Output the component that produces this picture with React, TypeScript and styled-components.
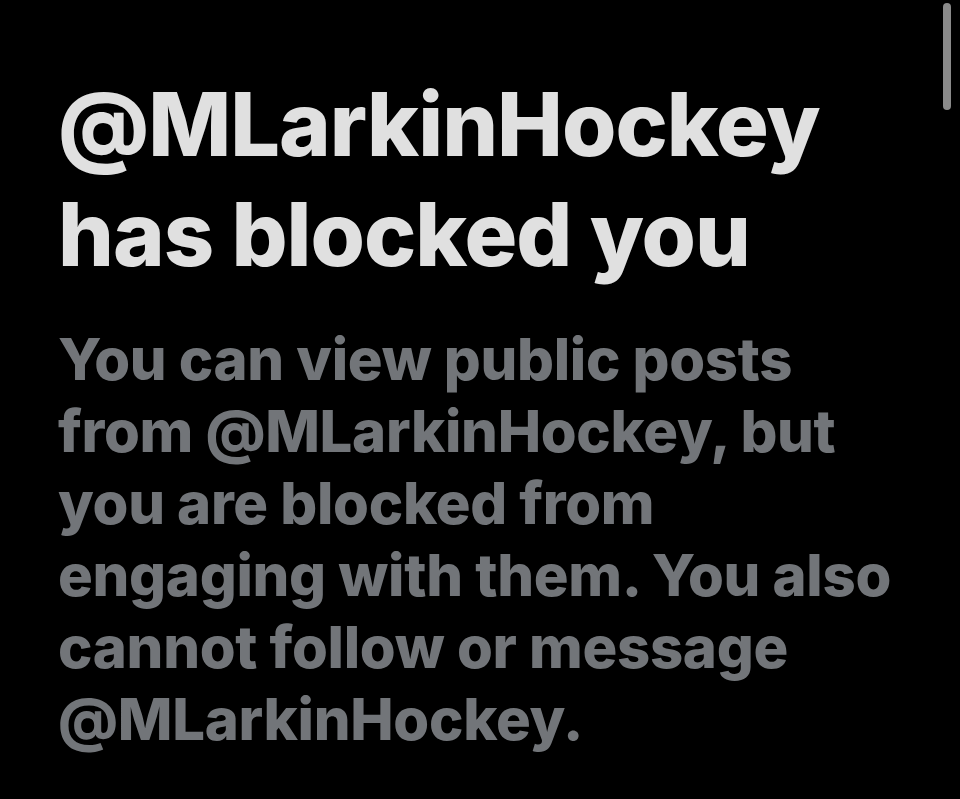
import styled, { createGlobalStyle } from "styled-components";

const GlobalStyle = createGlobalStyle`
  html, body {
    margin: 0;
    padding: 0;
    background: #000;
  }
  body {
    font-family: Inter, "Noto Sans", "Liberation Sans", sans-serif;
    -webkit-font-smoothing: antialiased;
  }
`;

const Screen = styled.div`
  position: relative;
  width: 960px;
  height: 799px;
  background: #000;
  overflow: hidden;
`;

const Content = styled.div`
  display: flex;
  flex-direction: column;
  gap: 34px;
  padding: 69px 0 0 58px;
  width: 870px;
`;

const Title = styled.h1`
  margin: 0;
  color: #e0e0e0;
  font-size: 88px;
  line-height: 110px;
  font-weight: 800;
  letter-spacing: -1px;
`;

const Body = styled.p`
  margin: 0;
  color: #727579;
  font-size: 58px;
  line-height: 72px;
  font-weight: 800;
  letter-spacing: -0.3px;
`;

const ScrollThumb = styled.div`
  position: absolute;
  top: 3px;
  right: 9px;
  width: 8px;
  height: 107px;
  border-radius: 4px;
  background: #8a8a8a;
`;

const handle = "@MLarkinHockey";

export default function App() {
  return (
    <Screen>
      <GlobalStyle />
      <Content>
        <Title>
          {handle}
          <br />
          has blocked you
        </Title>
        <Body>
          You can view public posts from {handle}, but you are blocked from
          engaging with them. You also cannot follow or message {handle}.
        </Body>
      </Content>
      <ScrollThumb />
    </Screen>
  );
}
